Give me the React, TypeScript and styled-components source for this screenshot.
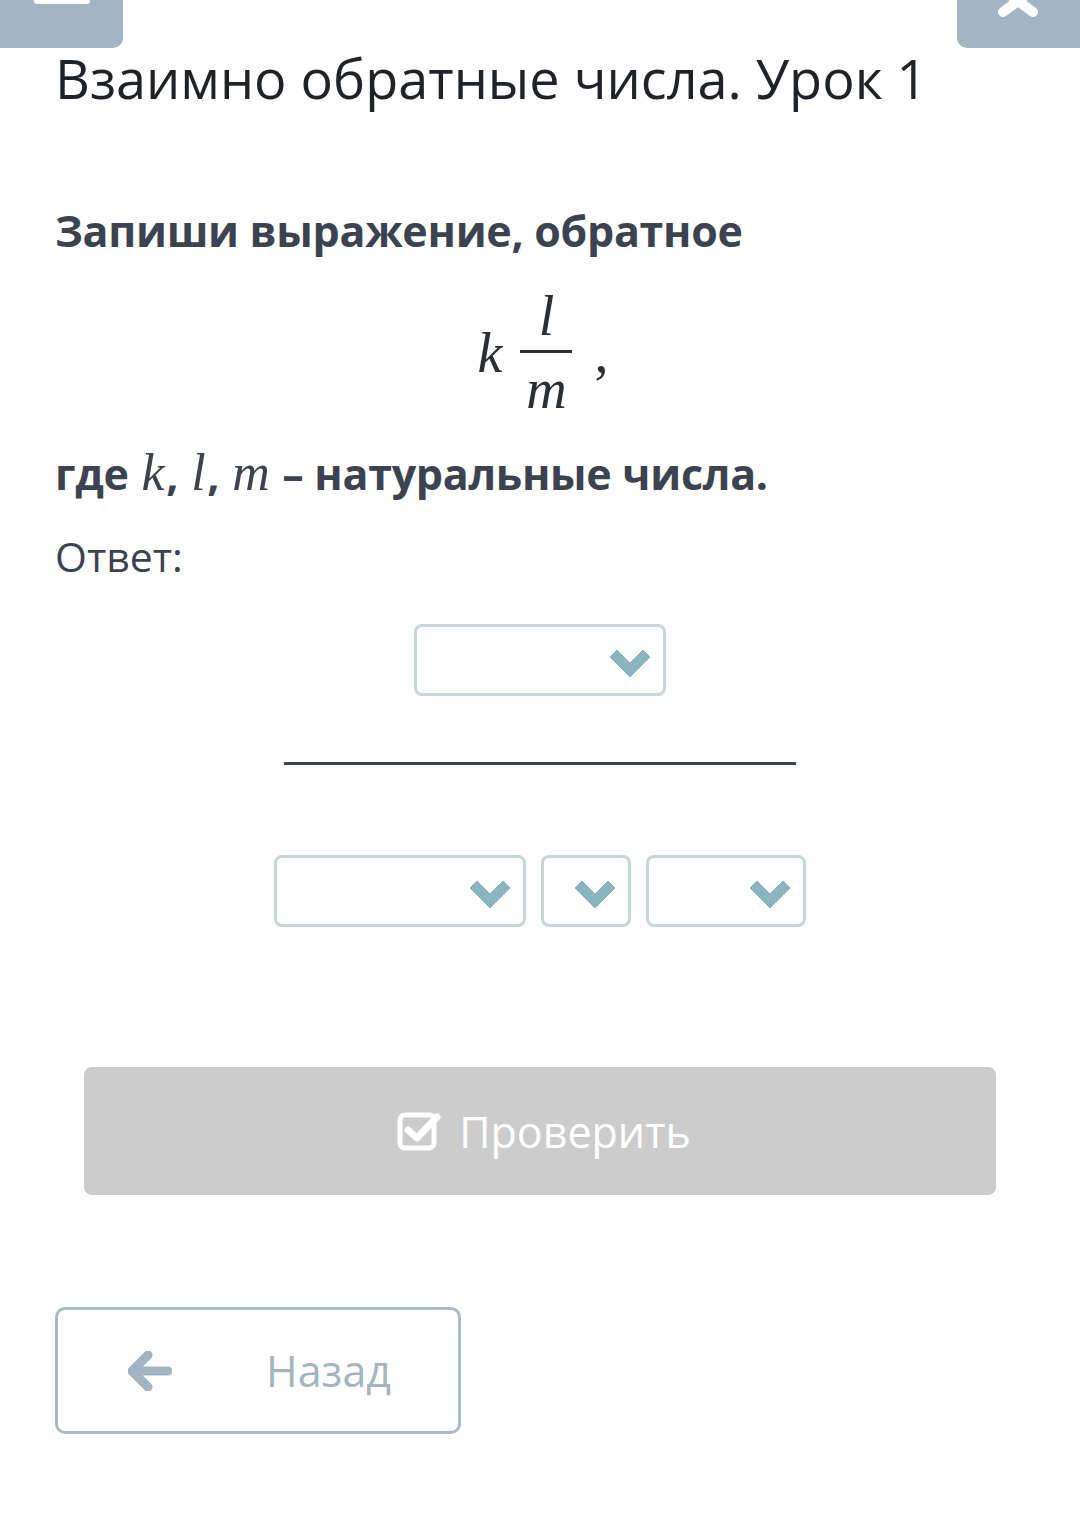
import styled, { createGlobalStyle } from 'styled-components';

const Global = createGlobalStyle`
  html, body { margin: 0; padding: 0; background: #fff; }
  body { font-family: 'Open Sans', 'Noto Sans', sans-serif; color: #3c4350; }
`;

const Page = styled.div`
  width: 1080px;
  height: 1514px;
  position: relative;
  overflow: hidden;
  background: #fff;
`;

const TopBar = styled.div`
  display: flex;
  justify-content: space-between;
  height: 48px;
  margin-top: -2px;
`;

const CornerBtn = styled.div<{ side: 'left' | 'right' }>`
  width: 123px;
  height: 50px;
  background: #a1b5c3;
  border-radius: ${(p) => (p.side === 'left' ? '0 0 10px 0' : '0 0 0 10px')};
  position: relative;
  overflow: hidden;
`;

const Dash = styled.div`
  position: absolute;
  left: 34px;
  top: -4px;
  width: 56px;
  height: 10px;
  border-radius: 3px;
  background: #fff;
`;

const Content = styled.div`
  padding: 0 55px;
`;

const Title = styled.h1`
  margin: 0;
  font-size: 54px;
  font-weight: 400;
  color: #1f2328;
  line-height: 64px;
`;

const Question = styled.p<{ mt: number }>`
  margin: ${(p) => p.mt}px 0 0;
  font-size: 43px;
  font-weight: 700;
  line-height: 52px;
  color: #3c4350;
  letter-spacing: -0.3px;
`;

const MathVar = styled.span`
  font-family: 'Liberation Serif', 'DejaVu Serif', serif;
  font-style: italic;
  font-weight: 400;
  font-size: 52px;
  margin: 0 2px;
`;

const Formula = styled.div`
  display: flex;
  justify-content: center;
  align-items: center;
  margin: 33px 0 32px 6px;
  font-family: 'Liberation Serif', 'DejaVu Serif', serif;
  font-style: italic;
  font-size: 56px;
  color: #2a2f36;
`;

const Frac = styled.div`
  display: flex;
  flex-direction: column;
  align-items: center;
  margin-left: 18px;
`;

const FracLine = styled.div`
  width: 52px;
  height: 3px;
  background: #2a2f36;
  margin: 8px 0 10px;
`;

const FracPart = styled.span`
  line-height: 52px;
  height: 52px;
`;

const Comma = styled.span`
  font-style: normal;
  margin-left: 22px;
`;

const Answer = styled.div`
  margin-top: 30px;
  font-size: 41px;
  color: #3c4350;
  line-height: 52px;
`;

const Center = styled.div<{ mt: number }>`
  display: flex;
  justify-content: center;
  gap: 15px;
  margin-top: ${(p) => p.mt}px;
`;

const Select = styled.div<{ w: number }>`
  width: ${(p) => p.w}px;
  height: 72px;
  box-sizing: border-box;
  border: 3px solid #c7d6da;
  border-radius: 8px;
  display: flex;
  justify-content: flex-end;
  align-items: center;
  padding: 6px 13px 0 0;
`;

const Rule = styled.div`
  width: 512px;
  height: 3px;
  background: #3c4350;
`;

const CheckButton = styled.div`
  margin: 140px 29px 0;
  height: 128px;
  border-radius: 8px;
  background: #cccccc;
  display: flex;
  justify-content: center;
  align-items: center;
  gap: 18px;
  color: #fff;
  font-size: 43px;
  padding-left: 8px;
`;

const BackButton = styled.div`
  margin-top: 112px;
  width: 406px;
  height: 127px;
  box-sizing: border-box;
  border: 3px solid #a9bcc5;
  border-radius: 10px;
  display: flex;
  align-items: center;
  padding-left: 70px;
  color: #a4b5bf;
  font-size: 43px;
`;

const BackLabel = styled.span`
  margin-left: 94px;
`;

const Chevron = () => (
  <svg width="40" height="27" viewBox="0 0 40 27">
    <path d="M0 7 L7 0 L20 13 L33 0 L40 7 L20 27 Z" fill="#8ab5c0" strokeLinejoin="round" stroke="#8ab5c0" strokeWidth="1" />
  </svg>
);

const Cross = () => (
  <svg width="123" height="50" viewBox="0 0 123 50" style={{ position: 'absolute', left: 0, top: 0 }}>
    <path d="M46 -8 L76 14 M76 -8 L46 14" stroke="#fff" strokeWidth="10" strokeLinecap="round" />
  </svg>
);

export default function App() {
  return (
    <Page>
      <Global />
      <TopBar>
        <CornerBtn side="left">
          <Dash />
        </CornerBtn>
        <CornerBtn side="right">
          <Cross />
        </CornerBtn>
      </TopBar>
      <Content>
        <Title>Взаимно обратные числа. Урок 1</Title>
        <Question mt={95}>Запиши выражение, обратное</Question>
        <Formula>
          <span>k</span>
          <Frac>
            <FracPart>l</FracPart>
            <FracLine />
            <FracPart>m</FracPart>
          </Frac>
          <Comma>,</Comma>
        </Formula>
        <Question mt={0}>
          где <MathVar>k</MathVar>, <MathVar>l</MathVar>, <MathVar>m</MathVar> – натуральные числа.
        </Question>
        <Answer>Ответ:</Answer>
      </Content>
      <Center mt={42}>
        <Select w={252}>
          <Chevron />
        </Select>
      </Center>
      <Center mt={66}>
        <Rule />
      </Center>
      <Center mt={90}>
        <Select w={252}>
          <Chevron />
        </Select>
        <Select w={90}>
          <Chevron />
        </Select>
        <Select w={160}>
          <Chevron />
        </Select>
      </Center>
      <Content>
        <CheckButton>
          <svg width="44" height="40" viewBox="0 0 44 40">
            <rect x="3" y="4" width="34" height="33" rx="5" fill="none" stroke="#fff" strokeWidth="5" />
            <path d="M11 19 L20 27 L40 6" fill="none" stroke="#fff" strokeWidth="7" strokeLinecap="round" strokeLinejoin="round" />
          </svg>
          <span>Проверить</span>
        </CheckButton>
        <BackButton>
          <svg width="44" height="40" viewBox="0 0 44 40">
            <path d="M20 4 L4 20 L20 36 M6 20 L40 20" fill="none" stroke="#a1b5c3" strokeWidth="9" strokeLinecap="round" strokeLinejoin="round" />
          </svg>
          <BackLabel>Назад</BackLabel>
        </BackButton>
      </Content>
    </Page>
  );
}
